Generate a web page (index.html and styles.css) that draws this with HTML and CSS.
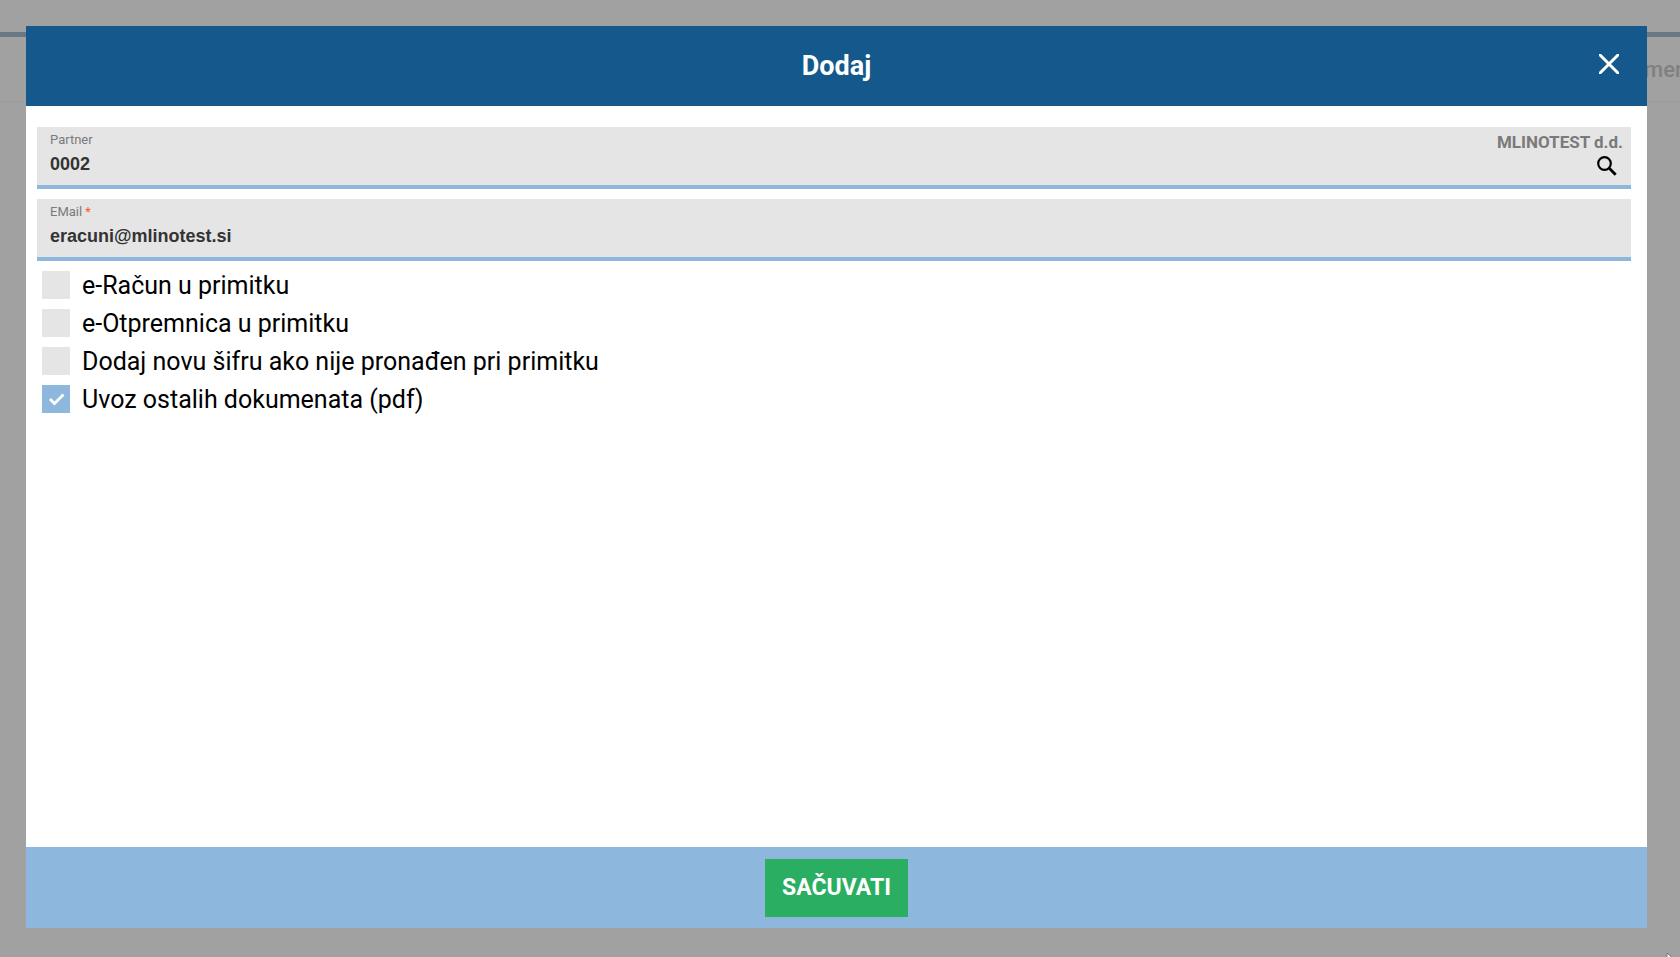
FILE: index.html
```html
<!DOCTYPE html>
<html lang="hr">
<head>
    <meta charset="UTF-8">
    <meta name="viewport" content="width=device-width, initial-scale=1.0">
    <title>Dodaj</title>
    <link rel="stylesheet" href="styles.css">
</head>
<body>
    <div class="page">
        <div class="topbar"></div>
        <div class="tabs">
            <span class="tab">men</span>
        </div>
    </div>

    <div class="overlay">
        <form class="modal" role="dialog" aria-labelledby="modalTitle">
            <header class="modal-header">
                <h1 id="modalTitle">Dodaj</h1>
                <button type="button" class="close" aria-label="Zatvori">
                    <svg width="20" height="20" viewBox="0 0 20 20"><path d="M0 0L20 20M20 0L0 20" fill="none" stroke="#fff" stroke-width="3"/></svg>
                </button>
            </header>

            <div class="modal-body">
                <div class="field">
                    <div class="field-main">
                        <label for="partner">Partner</label>
                        <input type="text" id="partner" value="0002">
                    </div>
                    <div class="field-side">
                        <span class="partner-name">MLINOTEST d.d.</span>
                        <button type="button" class="search" aria-label="Traži">
                            <svg width="20" height="20" viewBox="0 0 20 20"><circle cx="7.5" cy="7.5" r="6.3" fill="none" stroke="#000" stroke-width="2.2"/><path d="M12 12L18.7 18.7" stroke="#000" stroke-width="2.8"/></svg>
                        </button>
                    </div>
                </div>
                <div class="field">
                    <div class="field-main">
                        <label for="email">EMail <span class="required">*</span></label>
                        <input type="text" id="email" value="eracuni@mlinotest.si">
                    </div>
                </div>

                <div class="checks">
                    <label class="check"><input type="checkbox">e-Račun u primitku</label>
                    <label class="check"><input type="checkbox">e-Otpremnica u primitku</label>
                    <label class="check"><input type="checkbox">Dodaj novu šifru ako nije pronađen pri primitku</label>
                    <label class="check">
                        <input type="checkbox" checked>
                        <svg class="tick" width="28" height="28" viewBox="0 0 28 28"><path d="M8 14L12.5 18.5L21.5 9.5" fill="none" stroke="#fff" stroke-width="2.8"/></svg>
                        Uvoz ostalih dokumenata (pdf)
                    </label>
                </div>
            </div>

            <footer class="modal-footer">
                <button type="submit" class="save">SAČUVATI</button>
            </footer>
        </form>
    </div>

    <svg class="cursor" width="14" height="20" viewBox="0 0 14 20"><path d="M1 0V16L5 12L8 19L11 18L8 11H13Z" fill="#fff" stroke="#777" stroke-width="1"/></svg>
</body>
</html>
```
FILE: styles.css
```css
* {
    box-sizing: border-box;
}
body {
    margin: 0;
    height: 100vh;
    overflow: hidden;
    font-family: Roboto, sans-serif;
    background-color: #a1a1a1;
    color: #000;
}
button {
    border: none;
    padding: 0;
    background: none;
    font-family: inherit;
    cursor: pointer;
}
svg {
    display: block;
}
.topbar {
    height: 37px;
    border-bottom: 5px solid #6a7884;
}
.tabs {
    display: flex;
    justify-content: flex-end;
    align-items: center;
    height: 65px;
    border-bottom: 1px solid #9b9b9b;
}
.tab {
    width: 36px;
    overflow: hidden;
    font-size: 22px;
    font-weight: 500;
    color: #808080;
}
.overlay {
    position: fixed;
    inset: 0;
    display: flex;
    padding: 26px 33px 29px 26px;
}
.modal {
    flex: 1;
    display: flex;
    flex-direction: column;
    background-color: #fff;
}
.modal-header {
    display: grid;
    grid-template-columns: 1fr auto 1fr;
    align-items: center;
    height: 80px;
    padding: 0 28px;
    background-color: #15598c;
}
.modal-header h1 {
    grid-column: 2;
    margin: 0;
    font-size: 27px;
    font-weight: bold;
    color: #fff;
}
.close {
    justify-self: end;
    padding-bottom: 4px;
}
.modal-body {
    flex: 1;
    display: flex;
    flex-direction: column;
    gap: 10px;
    padding: 21px 16px 20px 11px;
}
.field {
    display: flex;
    height: 62px;
    padding: 5px 8px 0 13px;
    background-color: #e5e5e5;
    border-bottom: 4px solid #8db7dd;
}
.field-main {
    flex: 1;
    display: flex;
    flex-direction: column;
    gap: 4px;
}
.field-main label {
    font-size: 13px;
    line-height: 16px;
    color: #7a7a7a;
}
.required {
    color: #ff5722;
}
.field-main input {
    width: 100%;
    height: 24px;
    padding: 0;
    border: none;
    outline: none;
    background: none;
    font-family: "Liberation Sans", Arial, sans-serif;
    font-size: 18px;
    font-weight: bold;
    color: #333;
}
.field-side {
    display: flex;
    flex-direction: column;
    align-items: flex-end;
    gap: 4px;
}
.partner-name {
    font-size: 17px;
    line-height: 20px;
    font-weight: bold;
    color: #7a7a7a;
}
.search {
    margin-right: 6px;
}
.checks {
    display: flex;
    flex-direction: column;
    align-items: flex-start;
    gap: 8px;
    padding-left: 5px;
}
.check {
    position: relative;
    display: flex;
    align-items: flex-start;
    gap: 12px;
    font-size: 25px;
    line-height: 30px;
}
.check input {
    appearance: none;
    width: 28px;
    height: 28px;
    margin: 0;
    background-color: #e5e5e5;
}
.check input:checked {
    background-color: #8db7dd;
}
.tick {
    position: absolute;
    top: 0;
    left: 0;
    pointer-events: none;
}
.modal-footer {
    display: flex;
    justify-content: center;
    align-items: center;
    height: 81px;
    background-color: #8db7dd;
}
.save {
    height: 58px;
    padding: 0 17px;
    background-color: #2aae61;
    font-size: 23px;
    font-weight: bold;
    color: #fff;
}
.cursor {
    position: fixed;
    right: 0;
    bottom: -16px;
}
```
